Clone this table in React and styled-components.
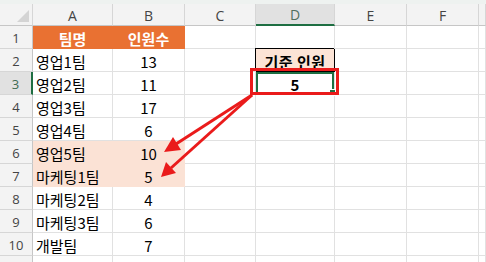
import React from "react";
import styled, { createGlobalStyle } from "styled-components";

const rows = [
  { a: "팀명", b: "인원수", head: true },
  { a: "영업1팀", b: 13, d: "기준 인원", dKind: "label" },
  { a: "영업2팀", b: 11, d: 5, dKind: "value" },
  { a: "영업3팀", b: 17 },
  { a: "영업4팀", b: 6 },
  { a: "영업5팀", b: 10, hl: true },
  { a: "마케팅1팀", b: 5, hl: true },
  { a: "마케팅2팀", b: 4 },
  { a: "마케팅3팀", b: 6 },
  { a: "개발팀", b: 7 },
  { a: "디자인팀", b: 4 },
];

const columns = ["A", "B", "C", "D", "E", "F", ""];

const App = () => {
  return (
    <Sheet>
      <GlobalStyle />
      <TopStrip />
      <Grid>
        <Corner>
          <svg width="12" height="12" viewBox="0 0 12 12">
            <polygon points="12,0 12,12 0,12" fill="#d4d4d4" />
          </svg>
        </Corner>
        {columns.map((c) => (
          <ColHead key={c || "g"} $selected={c === "D"}>
            {c}
          </ColHead>
        ))}
        {rows.map((r, i) => (
          <React.Fragment key={i}>
            <RowHead $selected={i === 2}>{i + 1}</RowHead>
            <Cell $fill={r.head ? "head" : r.hl ? "soft" : null}>{r.a}</Cell>
            <Cell $fill={r.head ? "head" : r.hl ? "soft" : null} $center>
              {r.b}
            </Cell>
            <Cell />
            {r.dKind === "label" && <LabelCell>{r.d}</LabelCell>}
            {r.dKind === "value" && (
              <ActiveCell>
                {r.d}
                <FillHandle />
              </ActiveCell>
            )}
            {!r.dKind && <Cell />}
            <Cell />
            <Cell />
            <Cell />
          </React.Fragment>
        ))}
      </Grid>
      <Highlight />
      <Arrows width="486" height="262" viewBox="0 0 486 262">
        <line x1="252" y1="95" x2="176" y2="144" stroke="#ea1b1b" strokeWidth="3" />
        <polygon points="164,152 173,137 181,150" fill="#ea1b1b" />
        <line x1="252" y1="95" x2="171" y2="168" stroke="#ea1b1b" strokeWidth="3" />
        <polygon points="161,177 166,162 176,173" fill="#ea1b1b" />
      </Arrows>
    </Sheet>
  );
};

//styled component
const GlobalStyle = createGlobalStyle`
  html, body {
    margin: 0;
    padding: 0;
    background: #fff;
    overflow: hidden;
  }
`;

const Sheet = styled.div`
  position: relative;
  width: 486px;
  height: 262px;
  overflow: hidden;
  background: #fff;
  font-family: "Noto Sans CJK KR", "Noto Sans", sans-serif;
`;

const TopStrip = styled.div`
  height: 4px;
  background: #eef2f0;
`;

const Grid = styled.div`
  display: grid;
  grid-template-columns: 33px 80px 72px 71px 79px 72px 72px 1fr;
  grid-template-rows: 22px;
  grid-auto-rows: 23px;
`;

const Corner = styled.div`
  background: #f3f3f3;
  border-right: 1px solid #d6d6d6;
  border-bottom: 1px solid #c6c6c6;
  display: flex;
  align-items: flex-end;
  justify-content: flex-end;
  padding: 0 3px 3px 0;
`;

const ColHead = styled.div`
  display: flex;
  align-items: center;
  justify-content: center;
  box-sizing: border-box;
  background: ${(p) => (p.$selected ? "#e1e1e1" : "#f3f3f3")};
  color: ${(p) => (p.$selected ? "#50705e" : "#444")};
  border-right: 1px solid #d6d6d6;
  border-bottom: ${(p) => (p.$selected ? "2px solid #1e6e42" : "1px solid #c6c6c6")};
  font-family: "Open Sans", "Noto Sans", sans-serif;
  font-size: 14px;
  padding-top: 1px;
`;

const RowHead = styled.div`
  display: flex;
  align-items: center;
  justify-content: center;
  box-sizing: border-box;
  background: ${(p) => (p.$selected ? "#e1e1e1" : "#f3f3f3")};
  color: ${(p) => (p.$selected ? "#3f6b52" : "#444")};
  border-right: ${(p) => (p.$selected ? "2px solid #1e6e42" : "1px solid #c6c6c6")};
  border-bottom: 1px solid #d6d6d6;
  font-family: "Open Sans", "Noto Sans", sans-serif;
  font-size: 13px;
  padding-top: 2px;
`;

const fills = {
  head: "#e97132",
  soft: "#fbe2d5",
};

const Cell = styled.div`
  display: flex;
  align-items: center;
  justify-content: ${(p) => (p.$center ? "center" : "flex-start")};
  box-sizing: border-box;
  padding: 2px 3px 0;
  background: ${(p) => (p.$fill ? fills[p.$fill] : "#fff")};
  border-right: 1px solid ${(p) => (p.$fill ? fills[p.$fill] : "#e1e1e1")};
  border-bottom: 1px solid ${(p) => (p.$fill ? fills[p.$fill] : "#e1e1e1")};
  color: ${(p) => (p.$fill === "head" ? "#fff" : "#000")};
  font-size: 15px;
  font-weight: ${(p) => (p.$fill === "head" ? 700 : 400)};
  white-space: nowrap;
  ${(p) => p.$fill === "head" && "justify-content: center;"}
`;

const LabelCell = styled(Cell)`
  position: relative;
  justify-content: center;
  background: #fce4d6;
  border-right: 1px solid #000;
  border-bottom: 1px solid #000;
  box-shadow: -1px -1px 0 #000;
  font-weight: 700;
  letter-spacing: 0.5px;
`;

const ActiveCell = styled(Cell)`
  position: relative;
  justify-content: center;
  box-shadow: inset 0 0 0 2px #1e6e42;
  font-weight: 700;
`;

const FillHandle = styled.span`
  position: absolute;
  right: -2px;
  bottom: -2px;
  width: 5px;
  height: 5px;
  background: #1e6e42;
  border: 1px solid #fff;
`;

const Highlight = styled.div`
  position: absolute;
  left: 250px;
  top: 68px;
  width: 89px;
  height: 27px;
  box-sizing: border-box;
  border: 3px solid #ea1b1b;
  pointer-events: none;
`;

const Arrows = styled.svg`
  position: absolute;
  left: 0;
  top: 0;
  pointer-events: none;
`;

export default App;
